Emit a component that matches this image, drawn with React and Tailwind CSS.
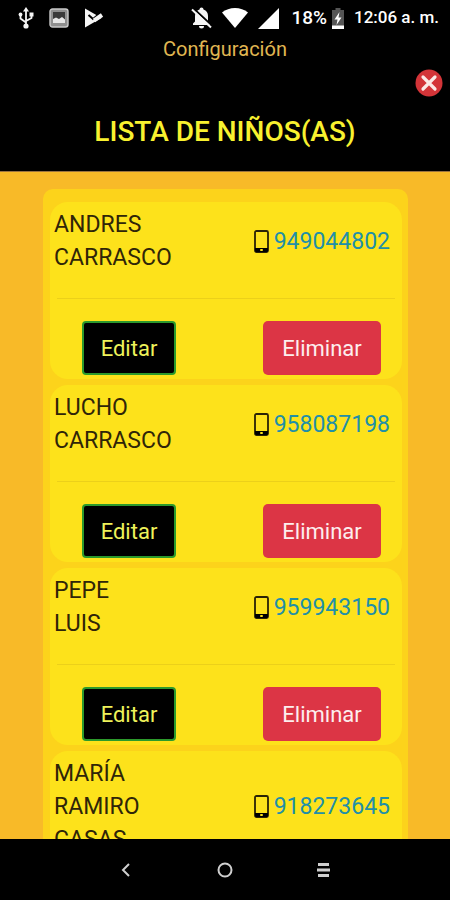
const children = [
  { id: 1, names: ["ANDRES", "CARRASCO"], phone: "949044802" },
  { id: 2, names: ["LUCHO", "CARRASCO"], phone: "958087198" },
  { id: 3, names: ["PEPE", "LUIS"], phone: "959943150" },
  { id: 4, names: ["MARÍA", "RAMIRO", "CASAS"], phone: "918273645" },
];

const UsbIcon = () => (
  <svg width="16" height="22" viewBox="0 0 16 22" fill="none" stroke="#f5f5f5" strokeWidth="1.8" aria-hidden="true">
    <path d="M8 3v16M2.500 8v3.500L8 15.500M13.500 8v3L8 14" />
    <path d="M8 0l3 4.500H5z" fill="#f5f5f5" stroke="none" />
    <circle cx="8" cy="19" r="2.600" fill="#f5f5f5" stroke="none" />
    <circle cx="2.500" cy="7.500" r="1.900" fill="#f5f5f5" stroke="none" />
    <path d="M11.500 5.500h4v4h-4z" fill="#f5f5f5" stroke="none" />
  </svg>
);

const PictureIcon = () => (
  <svg width="20" height="20" viewBox="0 0 20 20" aria-hidden="true">
    <rect x="1" y="1" width="18" height="18" rx="2.5" fill="#8f8f8f" stroke="#c9c9c9" strokeWidth="1.4" />
    <rect x="4" y="4" width="12" height="10" fill="#3a3a3a" />
    <path d="M4 15v-4l3-1.500 3 1.500 3-2 3 2.500V15z" fill="#e6e6e6" />
  </svg>
);

const PlayCheckIcon = () => (
  <svg width="20" height="20" viewBox="0 0 20 20" aria-hidden="true">
    <path d="M1 0.500 17.500 10 1 19.500z" fill="#f5f5f5" />
    <path d="M4.500 7l4.500 4 8.500-7" fill="none" stroke="#000" strokeWidth="2" />
    <path d="M10 12.500 18 7" fill="none" stroke="#f5f5f5" strokeWidth="4" />
  </svg>
);

const BellOffIcon = () => (
  <svg width="21" height="22" viewBox="0 0 21 22" aria-hidden="true">
    <path d="M8.500 2.500a2 2 0 0 1 4 0C15.500 3.500 17 6 17 9v5.500l2 2V18H2v-1.500l2-2V9c0-3 1.500-5.500 4.500-6.500z" fill="#f5f5f5" />
    <path d="M8 19h5a2.500 2.500 0 0 1-5 0z" fill="#f5f5f5" />
    <path d="M2.500 1.500 21.500 19" stroke="#000" strokeWidth="2" />
    <path d="M1 2.500 20 20.500" stroke="#f5f5f5" strokeWidth="2" />
  </svg>
);

const BatteryIcon = () => (
  <svg width="12" height="21" viewBox="0 0 12 21" aria-hidden="true">
    <path d="M3.5 0h5v2H12v19H0V2h3.5z" fill="#555" />
    <path d="M0 17.5h12V21H0z" fill="#fff" />
    <path d="M7.5 4 2.5 11.5h3L4.5 17l5-7.500h-3z" fill="#fff" />
  </svg>
);

const PhoneIcon = () => (
  <svg width="15" height="23" viewBox="0 0 15 23" className="shrink-0" aria-hidden="true">
    <rect x="1" y="1" width="13" height="21" rx="1.500" fill="none" stroke="#2a2206" strokeWidth="1.800" />
    <path d="M1 18h13v2.500a1.500 1.500 0 0 1-1.500 1.500h-10A1.500 1.500 0 0 1 1 20.500z" fill="#000" />
    <rect x="6" y="19" width="3" height="2" rx="1" fill="#fde21b" />
  </svg>
);

const StatusBar = () => (
  <div className="flex h-9 items-center justify-between pl-[18px] pr-[11px] text-white">
    <div className="flex items-center gap-[15px]">
      <UsbIcon />
      <PictureIcon />
      <PlayCheckIcon />
    </div>
    <div className="flex items-center gap-[10px] font-medium">
      <BellOffIcon />
      <svg width="26" height="20" viewBox="0 0 26 20" fill="#fff" aria-hidden="true">
        <path d="M13 20 0 4.500C7-1.500 19-1.500 26 4.500z" />
      </svg>
      <svg width="21" height="21" viewBox="0 0 21 21" fill="#fff" className="mr-[2px]" aria-hidden="true">
        <path d="M21 0v21H0z" />
      </svg>
      <div className="flex items-center gap-[5px] text-[19px]">
        <span>18%</span>
        <BatteryIcon />
      </div>
      <span className="text-[17px] whitespace-nowrap">12:06 a. m.</span>
    </div>
  </div>
);

const Header = () => (
  <header className="shrink-0 border-b border-[#9c7440] bg-black">
    <StatusBar />
    <p className="text-center text-[20px] leading-[26px] text-[#e0b752]">Configuración</p>
    <div className="mt-[7px] flex justify-end pr-[7px]">
      <button type="button" aria-label="Cerrar" className="block size-7">
        <svg viewBox="0 0 28 28" aria-hidden="true">
          <circle cx="14" cy="14" r="13.500" fill="#d33438" />
          <path d="M8 8l12 12M20 8 8 20" stroke="#fbe9e6" strokeWidth="3.200" strokeLinecap="round" />
        </svg>
      </button>
    </div>
    <h1 className="mt-4 mb-[20px] text-center text-[28px] leading-[38px] font-medium text-[#f8f12f]">
      LISTA DE NIÑOS(AS)
    </h1>
  </header>
);

const ChildCard = ({ child }) => (
  <li className="rounded-[18px] bg-[#fde21b] px-1 pt-[6px] pb-1">
    <div className="flex items-center justify-between pr-[8px] text-[23px] leading-[33px]">
      <p className="text-[#2f2508]">
        {child.names.map((name) => (
          <span key={name} className="block">{name}</span>
        ))}
      </p>
      <div className="flex items-center gap-[5px]">
        <PhoneIcon />
        <a href={`tel:${child.phone}`} className="text-[#218fa8]">{child.phone}</a>
      </div>
    </div>
    <hr className="mx-[3px] mt-6 mb-[22px] border-[#ecd01a]" />
    <div className="flex justify-between pl-7 pr-[17px] text-[22px]">
      <button type="button" className="h-[54px] w-[94px] rounded-[4px] border-2 border-[#2c9a2c] bg-black text-[#eef25a]">
        Editar
      </button>
      <button type="button" className="h-[54px] w-[118px] rounded-[5px] bg-[#dc3545] text-[#fdeeee]">
        Eliminar
      </button>
    </div>
  </li>
);

const NavBar = () => (
  <nav className="grid h-[61px] shrink-0 grid-cols-3 items-center justify-items-center bg-black px-[77px] text-[#cfcfcf]">
    <button type="button" aria-label="Atrás">
      <svg width="16" height="16" viewBox="0 0 16 16" fill="none" stroke="currentColor" strokeWidth="2" aria-hidden="true">
        <path d="M11 2 5 8l6 6" />
      </svg>
    </button>
    <button type="button" aria-label="Inicio">
      <svg width="16" height="16" viewBox="0 0 16 16" fill="none" stroke="currentColor" strokeWidth="2" aria-hidden="true">
        <circle cx="8" cy="8" r="6.500" />
      </svg>
    </button>
    <button type="button" aria-label="Recientes">
      <svg width="16" height="16" viewBox="0 0 16 16" fill="currentColor" aria-hidden="true">
        <path d="M2 1h11v3H2zM1 6.500h13v3H1zM2 12h11v3H2z" />
      </svg>
    </button>
  </nav>
);

const App = () => {
  return (
    <div className="flex h-screen flex-col bg-[#f8ba28] font-[Roboto,sans-serif]">
      <Header />
      <main className="min-h-0 flex-1 overflow-y-auto pt-[17px] pr-[42px] pl-[43px] [scrollbar-width:none]">
        <ul className="flex flex-col gap-[6px] rounded-[10px] bg-[#fcd31b] pt-[13px] pr-[6px] pb-3 pl-[7px]">
          {children.map((child) => (
            <ChildCard key={child.id} child={child} />
          ))}
        </ul>
      </main>
      <NavBar />
    </div>
  );
};

export default App;
